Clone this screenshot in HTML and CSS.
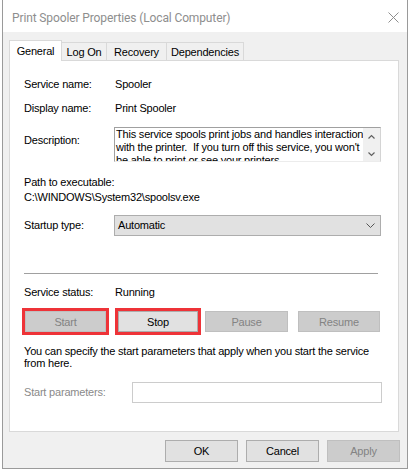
FILE: index.html
```html
<!DOCTYPE html>
<html>
<head>
<meta charset="utf-8">
<link rel="stylesheet" href="styles.css">
</head>
<body>
<div class="window">
  <div class="titlebar">
    <span class="title">Print Spooler Properties (Local Computer)</span>
    <svg class="close" width="11" height="11" viewBox="0 0 11 11"><path d="M0.5 0.5 L10.5 10.5 M10.5 0.5 L0.5 10.5" stroke="#8e8e8e" stroke-width="1" fill="none"/></svg>
  </div>
  <div class="client">
    <div class="tabs">
      <div class="tab active">General</div>
      <div class="tab first">Log On</div>
      <div class="tab">Recovery</div>
      <div class="tab">Dependencies</div>
    </div>
    <div class="panel">
      <div class="field row-name"><span class="label">Service name:</span><span>Spooler</span></div>
      <div class="field row-display"><span class="label">Display name:</span><span>Print Spooler</span></div>
      <div class="field row-desc">
        <span class="label desc-label">Description:</span>
        <div class="textbox">
          <div class="textbox-text">This service spools print jobs and handles interaction<br>with the printer.&nbsp; If you turn off this service, you won't<br>be able to print or see your printers.</div>
          <div class="scrollbar">
            <svg width="17" height="33" viewBox="0 0 17 33"><path d="M5.5 10.5 L8.5 7.5 L11.5 10.5" stroke="#606060" stroke-width="1.2" fill="none"/><path d="M5.5 24.5 L8.5 27.5 L11.5 24.5" stroke="#606060" stroke-width="1.2" fill="none"/></svg>
          </div>
        </div>
      </div>
      <div class="path-block">
        <div>Path to executable:</div>
        <div>C:\WINDOWS\System32\spoolsv.exe</div>
      </div>
      <div class="field row-startup">
        <span class="label">Startup type:</span>
        <div class="select">
          <span>Automatic</span>
          <svg width="9" height="6" viewBox="0 0 9 6"><path d="M0.5 0.5 L4.5 4.5 L8.5 0.5" stroke="#555" stroke-width="1" fill="none"/></svg>
        </div>
      </div>
      <div class="separator"></div>
      <div class="field row-status"><span class="label">Service status:</span><span>Running</span></div>
      <div class="svc-buttons">
        <button class="btn disabled marked b-start">Start</button>
        <button class="btn marked b-stop">Stop</button>
        <button class="btn disabled b-pause">Pause</button>
        <button class="btn disabled b-resume">Resume</button>
      </div>
      <p class="hint">You can specify the start parameters that apply when you start the service<br>from here.</p>
      <div class="field row-params">
        <span class="label params-label">Start parameters:</span>
        <div class="input"></div>
      </div>
    </div>
    <div class="actions">
      <button class="btn action">OK</button>
      <button class="btn action">Cancel</button>
      <button class="btn action disabled">Apply</button>
    </div>
  </div>
</div>
</body>
</html>
```

FILE: styles.css
```css
* { box-sizing: border-box; }
html, body { margin: 0; padding: 0; background: #ffffff; }
body {
  width: 410px;
  height: 472px;
  overflow: hidden;
  font-family: "Liberation Sans", Arial, sans-serif;
  font-size: 11px;
  letter-spacing: -0.2px;
  color: #000;
}
.window {
  margin-left: 2px;
  width: 406px;
  height: 469px;
  border: 1px solid #9a9a9a;
  border-top: none;
  background: #f0f0f0;
  display: flex;
  flex-direction: column;
}
.titlebar {
  height: 32px;
  background: #ffffff;
  display: flex;
  align-items: center;
  justify-content: space-between;
  padding: 3px 8px 0 9px;
}
.title {
  font-family: Roboto, "Liberation Sans", sans-serif;
  font-size: 12px;
  letter-spacing: -0.12px;
  color: #8e8e8e;
  line-height: 16px;
}
.close { display: block; margin-top: -1px; }
.client {
  flex: 1;
  padding: 8px 0 0 6px;
}
.tabs {
  display: flex;
  align-items: flex-end;
  height: 21px;
  margin-bottom: -1px;
  position: relative;
  z-index: 1;
}
.tab {
  height: 18px;
  margin-bottom: 1px;
  border-top: 1px solid #d9d9d9;
  border-right: 1px solid #d9d9d9;
  background: #f0f0f0;
  text-align: center;
  line-height: 17px;
  padding-top: 1px;
}
.tab.active {
  height: 21px;
  margin-bottom: 0;
  width: 53px;
  background: #ffffff;
  border-left: 1px solid #d9d9d9;
  line-height: 18px;
  padding-top: 1px;
}
.tab.first { width: 45px; }
.tab:nth-child(3) { width: 60px; }
.tab:nth-child(4) { width: 77px; }
.panel {
  width: 390px;
  height: 372px;
  background: #ffffff;
  border: 1px solid #d9d9d9;
  padding: 17px 0 0 14px;
}
.field {
  display: flex;
  line-height: 13px;
}
.label { width: 91px; flex: none; }
.row-display { margin-top: 11px; }
.row-desc { margin-top: 12px; align-items: flex-start; }
.desc-label { padding-top: 7px; }
.textbox {
  margin-left: -1px;
  width: 267px;
  height: 35px;
  border-top: 1px solid #a0a0a0;
  border-left: 1px solid #a0a0a0;
  border-right: 1px solid #d4d4d4;
  border-bottom: 1px solid #ececec;
  display: flex;
  overflow: hidden;
}
.textbox-text {
  flex: 1;
  white-space: nowrap;
  overflow: hidden;
  padding-left: 1px;
  line-height: 13px;
}
.scrollbar {
  width: 17px;
  flex: none;
  background: #f0f0f0;
}
.scrollbar svg { display: block; }
.path-block {
  margin-top: 13px;
  line-height: 15px;
}
.row-startup { margin-top: 10px; align-items: center; }
.select {
  margin-left: -1px;
  width: 267px;
  height: 21px;
  background: #e1e1e1;
  border: 1px solid #adadad;
  display: flex;
  align-items: center;
  justify-content: space-between;
  padding: 0 5px 0 3px;
}
.select svg { display: block; }
.separator {
  margin-top: 37px;
  width: 354px;
  height: 1px;
  background: #a0a0a0;
}
.row-status { margin-top: 12px; }
.svc-buttons {
  margin-top: 12px;
  display: flex;
  height: 21px;
  margin-left: 1px;
}
.btn {
  font-family: "Liberation Sans", Arial, sans-serif;
  font-size: 11px;
  letter-spacing: -0.2px;
  color: #000;
  background: #e1e1e1;
  border: 1px solid #adadad;
  padding: 0;
  margin: 0;
  height: 21px;
  text-align: center;
}
.btn.disabled {
  background: #cccccc;
  border-color: #bfbfbf;
  color: #838383;
}
.btn.marked {
  outline: 3px solid #ee3338;
}
.b-start { width: 81px; }
.b-stop { width: 80px; margin-left: 12px; }
.b-pause { width: 83px; margin-left: 7px; }
.b-resume { width: 82px; margin-left: 10px; }
.hint {
  margin: 13px 0 0 0;
  line-height: 12px;
}
.row-params { margin-top: 13px; align-items: center; }
.params-label { width: 108px; color: #8a8a8a; }
.input {
  width: 250px;
  height: 21px;
  border: 1px solid #cccccc;
  background: #fff;
}
.actions {
  margin-top: 8px;
  display: flex;
  justify-content: flex-end;
  gap: 8px;
  padding-right: 7px;
}
.btn.action {
  width: 73px;
  height: 22px;
}
```
